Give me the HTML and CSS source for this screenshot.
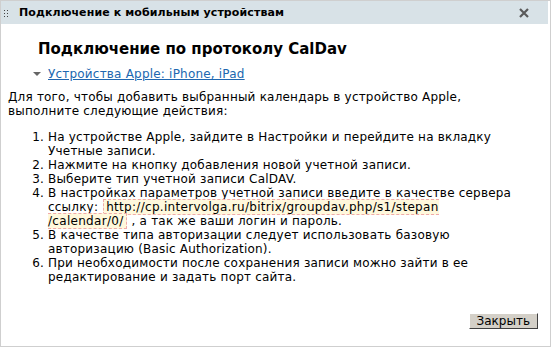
FILE: index.html
```html
<!DOCTYPE html>
<html lang="ru">
<head>
<meta charset="utf-8">
<link rel="stylesheet" href="styles.css">
</head>
<body>
<div class="dialog">
  <div class="titlebar">
    <span class="grip"></span>
    <span class="title">Подключение к мобильным устройствам</span>
    <svg class="close" width="10" height="10" viewBox="0 0 10 10"><path d="M1 1 L9 9 M9 1 L1 9" stroke="#5a5a5a" stroke-width="2.2" fill="none"/></svg>
  </div>
  <div class="content">
    <h2 class="heading">Подключение по протоколу CalDav</h2>
    <div class="toggle"><span class="arrow"></span><a href="#" class="link">Устройства Apple: iPhone, iPad</a></div>
    <p class="intro">Для того, чтобы добавить выбранный календарь в устройство Apple, выполните следующие действия:</p>
    <ol class="steps">
      <li>На устройстве Apple, зайдите в Настройки и перейдите на вкладку Учетные записи.</li>
      <li>Нажмите на кнопку добавления новой учетной записи.</li>
      <li>Выберите тип учетной записи CalDAV.</li>
      <li>В настройках параметров учетной записи введите в качестве сервера ссылку: <span class="code">http://cp.intervolga.ru/bitrix/groupdav.php/s1/stepan /calendar/0/</span> , а так же ваши логин и пароль.</li>
      <li>В качестве типа авторизации следует использовать базовую авторизацию (Basic Authorization).</li>
      <li>При необходимости после сохранения записи можно зайти в ее редактирование и задать порт сайта.</li>
    </ol>
  </div>
  <div class="footer">
    <button class="btn">Закрыть</button>
  </div>
</div>
</body>
</html>
```

FILE: styles.css
```css
html, body {
  margin: 0;
  padding: 0;
  background: #fff;
}
body {
  font-family: "DejaVu Sans", Verdana, sans-serif;
  font-size: 12px;
  color: #000;
}
.dialog {
  width: 549px;
  height: 345px;
  border: 1px solid #cfcfcf;
  display: flex;
  flex-direction: column;
  background: #fff;
}
.titlebar {
  height: 23px;
  background: #d8e2e7;
  display: flex;
  align-items: center;
  margin-right: 2px;
}
.grip {
  width: 5px;
  height: 8px;
  margin-left: 2px;
  margin-right: 11px;
  background-image: radial-gradient(circle, #444 0.7px, transparent 0.9px);
  background-size: 3px 3px;
}
.title {
  font-weight: bold;
  font-size: 11px;
  color: #000;
  flex: 1;
  letter-spacing: 0.1px;
}
.close {
  margin-right: 19px;
  display: block;
}
.content {
  flex: 1;
  padding: 0 35px 0 7px;
  letter-spacing: 0.2px;
}
.heading {
  font-size: 15px;
  font-weight: bold;
  margin: 16px 0 0 30px;
  line-height: 18px;
  letter-spacing: 0;
}
.toggle {
  margin: 9px 0 0 25px;
  display: flex;
  align-items: center;
}
.arrow {
  width: 0;
  height: 0;
  border-left: 4px solid transparent;
  border-right: 4px solid transparent;
  border-top: 4px solid #666;
  margin-right: 7px;
}
.link {
  color: #2067b0;
  text-decoration: underline;
}
.intro {
  margin: 9px 0 0 0;
  line-height: 14px;
}
.steps {
  margin: 12px 0 0 0;
  padding-left: 40px;
  line-height: 14px;
}
.code {
  background: #fff8dc;
  border: 1px dashed #f0aaaa;
  padding: 0 2px;
  margin: 0 1px;
  letter-spacing: 0.3px;
}
.footer {
  display: flex;
  justify-content: flex-end;
  padding: 0 12px 17px 0;
}
.btn {
  font-family: "DejaVu Sans", Verdana, sans-serif;
  font-size: 12px;
  background: #d4d0c8;
  border: 1px solid;
  border-color: #fff #404040 #404040 #fff;
  padding: 0 7px;
  height: 16px;
  line-height: 13px;
  color: #000;
}
```
